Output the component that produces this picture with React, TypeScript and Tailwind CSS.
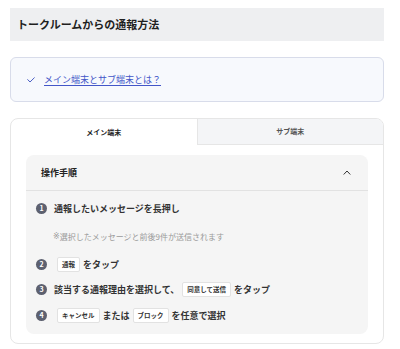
import React from 'react'

const font = { fontFamily: '"Noto Sans CJK JP", "Noto Sans", sans-serif' }

function Num({ n }: { n: number }) {
  return (
    <span className="flex h-[11px] w-[11px] shrink-0 items-center justify-center rounded-full bg-[#5d6170] text-[7px] font-bold leading-none text-white">
      {n}
    </span>
  )
}

function Badge({ children }: { children: React.ReactNode }) {
  return (
    <span className="mx-[3px] inline-flex h-[15px] items-center rounded-[2px] border border-[#e2e2e2] bg-white px-[4px] text-[6.5px] font-bold leading-none text-[#333]">
      {children}
    </span>
  )
}

function Step({ n, children }: { n: number; children: React.ReactNode }) {
  return (
    <div className="flex h-[15px] items-center gap-[7px]">
      <Num n={n} />
      <div className="flex items-center text-[9px] font-bold leading-none text-[#333]">{children}</div>
    </div>
  )
}

export default function App() {
  return (
    <div className="min-h-[349px] bg-white pt-[8px]" style={font}>
      <div className="ml-[10px] w-[374px]">
        <div className="flex h-[33px] items-center bg-[#eeeff1] px-[7px]">
          <h1 className="text-[11px] font-bold leading-none text-[#1f1f1f]">トークルームからの通報方法</h1>
        </div>

        <div className="mt-[16px] flex h-[45px] items-center gap-[9px] rounded-[6px] border border-[#d8dcea] bg-[#f7f9fd] pl-[16px]">
          <svg width="8" height="6" viewBox="0 0 8 6" fill="none" stroke="#4b5fc4" strokeWidth="1" strokeLinecap="round" strokeLinejoin="round">
            <polyline points="0.7,2.6 3,5 7.3,0.8" />
          </svg>
          <a className="text-[9px] leading-none text-[#4356c8] underline underline-offset-[2px]">メイン端末とサブ端末とは？</a>
        </div>

        <div className="mt-[16px] overflow-hidden rounded-[8px] border border-[#e6e6e6] bg-white pb-[9px]">
          <div className="flex h-[26px]">
            <div className="flex flex-1 items-center justify-center text-[7px] font-bold leading-none text-[#222]">メイン端末</div>
            <div className="flex flex-1 items-center justify-center border-b border-l border-[#e6e6e6] bg-[#f4f5f7] text-[7px] font-bold leading-none text-[#555]">サブ端末</div>
          </div>

          <div className="mx-[15px] mt-[10px] rounded-[8px] bg-[#f5f5f5]">
            <div className="flex h-[36px] items-center justify-between border-b border-[#e2e2e2] pl-[15px] pr-[17px]">
              <span className="text-[9px] font-bold leading-none text-[#222]">操作手順</span>
              <svg width="8" height="5" viewBox="0 0 8 5" fill="none" stroke="#333" strokeWidth="1" strokeLinecap="round" strokeLinejoin="round">
                <polyline points="1,4.2 4,1 7,4.2" />
              </svg>
            </div>

            <div className="px-[10px] pb-[11px] pt-[10px]">
              <Step n={1}>通報したいメッセージを長押し</Step>
              <p className="mt-[15px] flex h-[12px] items-center pl-[17px] text-[8px] leading-none text-[#9a9a9a]">
                <span style={{ fontFamily: '"DejaVu Sans", sans-serif' }}>※</span>選択したメッセージと前後9件が送信されます
              </p>
              <div className="mt-[14px]">
                <Step n={2}>
                  <Badge>通報</Badge>をタップ
                </Step>
              </div>
              <div className="mt-[10px]">
                <Step n={3}>
                  該当する通報理由を選択して、<Badge>同意して送信</Badge>をタップ
                </Step>
              </div>
              <div className="mt-[11px]">
                <Step n={4}>
                  <Badge>キャンセル</Badge>または<Badge>ブロック</Badge>を任意で選択
                </Step>
              </div>
            </div>
          </div>
        </div>
      </div>
    </div>
  )
}
